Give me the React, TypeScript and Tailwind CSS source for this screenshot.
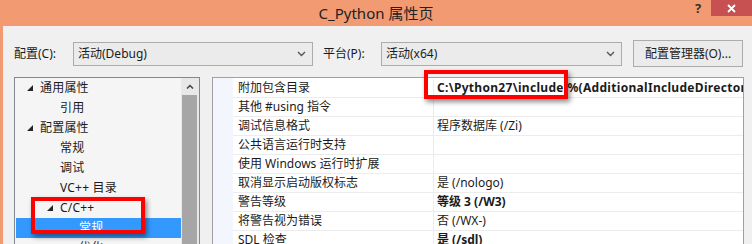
import React from 'react';

const treeItems = [
    { label: '通用属性', indent: 40, arrow: true },
    { label: '引用', indent: 60 },
    { label: '配置属性', indent: 40, arrow: true },
    { label: '常规', indent: 60 },
    { label: '调试', indent: 60 },
    { label: 'VC++ 目录', indent: 60 },
    { label: 'C/C++', indent: 60, arrow: true },
    { label: '常规', indent: 79, selected: true },
    { label: '优化', indent: 79 },
];

const props = [
    { name: '附加包含目录', value: 'C:\\Python27\\include;%(AdditionalIncludeDirectories)', bold: true, wide: true },
    { name: '其他 #using 指令', value: '' },
    { name: '调试信息格式', value: '程序数据库 (/Zi)' },
    { name: '公共语言运行时支持', value: '' },
    { name: '使用 Windows 运行时扩展', value: '' },
    { name: '取消显示启动版权标志', value: '是 (/nologo)' },
    { name: '警告等级', value: '等级 3 (/W3)', bold: true },
    { name: '将警告视为错误', value: '否 (/WX-)' },
    { name: 'SDL 检查', value: '是 (/sdl)', bold: true },
];

const Chevron = () => (
    <svg width="9" height="6" viewBox="0 0 9 6" className="shrink-0">
        <path d="M1 1 L4.5 4.5 L8 1" fill="none" stroke="#555" strokeWidth="1.4" />
    </svg>
);

const Expander = () => (
    <svg width="6" height="6" viewBox="0 0 6 6" className="shrink-0">
        <polygon points="6,0 6,6 0,6" fill="#262626" />
    </svg>
);

const Dropdown: React.FC<{ value: string; width: string }> = ({ value, width }) => (
    <div className={`${width} h-6 border border-[#acacac] bg-[#ebebeb] flex items-center justify-between pl-[4px] pr-[6px]`}>
        <span>{value}</span>
        <Chevron />
    </div>
);

export default function App() {
    return (
        <div className="w-[752px] h-[244px] overflow-hidden bg-[#f29a72] flex flex-col font-['Noto_Sans','Noto_Sans_CJK_SC',sans-serif] text-[12px] text-[#1b1b1b]">
            {/* Title bar */}
            <div className="h-[26px] shrink-0 relative flex items-center justify-center">
                <span className="text-[15px] text-[#222]">C_Python 属性页</span>
                <div className="absolute right-0 top-0 flex items-start">
                    <span className="w-[26px] h-[16px] flex items-center justify-center text-[13px] font-bold text-[#333] mt-[1px]">?</span>
                    <div className="w-[41px] h-[16px] bg-[#c75050] flex items-center justify-center">
                        <svg width="9" height="9" viewBox="0 0 9 9">
                            <path d="M1 1 L8 8 M8 1 L1 8" stroke="#fff" strokeWidth="1.8" />
                        </svg>
                    </div>
                </div>
            </div>

            {/* Body */}
            <div className="flex-1 ml-[3px] bg-[#f0f0f0] flex flex-col pt-[14px] pl-[11px] relative">
                {/* Config row */}
                <div className="flex items-center h-[27px]">
                    <span className="w-[59px]">配置(C):</span>
                    <Dropdown value="活动(Debug)" width="w-[240px]" />
                    <span className="ml-[10px] w-[58px]">平台(P):</span>
                    <Dropdown value="活动(x64)" width="w-[241px]" />
                    <div className="ml-[11px] w-[110px] h-[27px] border border-[#acacac] bg-[#ebebeb] flex items-center justify-center">
                        配置管理器(O)...
                    </div>
                </div>

                {/* Panels */}
                <div className="flex mt-[10px] flex-1 min-h-0">
                    {/* Tree */}
                    <div className="w-[186px] border border-[#828790] border-b-0 bg-[#f5f5f5] flex">
                        <div className="flex-1 flex flex-col pl-[1px]">
                            {treeItems.map((item, i) => (
                                <div
                                    key={i}
                                    className={`h-5 shrink-0 flex items-center relative tracking-[0.2px] ${item.selected ? 'bg-[#3399ff] text-white' : ''}`}
                                >
                                    {item.arrow && (
                                        <span className="absolute top-[7px]" style={{ left: item.indent - 29 }}>
                                            <Expander />
                                        </span>
                                    )}
                                    <span style={{ paddingLeft: item.indent - 16 }}>{item.label}</span>
                                </div>
                            ))}
                        </div>
                        <div className="w-[18px] flex flex-col bg-[#e8e8e8] pl-[1px] pr-[2px]">
                            <div className="h-[17px] flex items-center justify-center">
                                <svg width="8" height="5" viewBox="0 0 8 5">
                                    <path d="M1 4.5 L4 1.5 L7 4.5" fill="none" stroke="#444" strokeWidth="1.5" />
                                </svg>
                            </div>
                            <div className="flex-1 bg-[#a6a6a6]" />
                        </div>
                    </div>

                    {/* Property grid */}
                    <div className="ml-[12px] w-[532px] border border-[#a0a0a0] border-b-0 bg-white flex">
                        <div className="w-[20px] bg-[#f3f6fc] shrink-0" />
                        <div className="flex-1 flex flex-col pt-[1px] min-w-0">
                            {props.map((p, i) => (
                                <div key={i} className="h-[19px] shrink-0 flex border-b border-[#ececec]">
                                    <div className="w-[200px] shrink-0 pl-[5px] flex items-center whitespace-nowrap">{p.name}</div>
                                    <div className={`flex-1 min-w-0 border-l border-[#ececec] pl-[3px] flex items-center whitespace-nowrap overflow-hidden ${p.bold ? 'font-bold' : ''} ${p.wide ? 'tracking-[0.3px]' : ''}`}>
                                        {p.value}
                                    </div>
                                </div>
                            ))}
                        </div>
                    </div>
                </div>

                {/* Annotation boxes */}
                <div className="absolute left-[421px] top-[44px] w-[144px] h-[29px] border-4 border-[#ff0000] shadow-[2px_3px_5px_rgba(0,0,0,0.45)]" />
                <div className="absolute left-[28px] top-[171px] w-[114px] h-[37px] border-4 border-[#ff0000] shadow-[2px_3px_5px_rgba(0,0,0,0.45)]" />
            </div>
        </div>
    );
}
